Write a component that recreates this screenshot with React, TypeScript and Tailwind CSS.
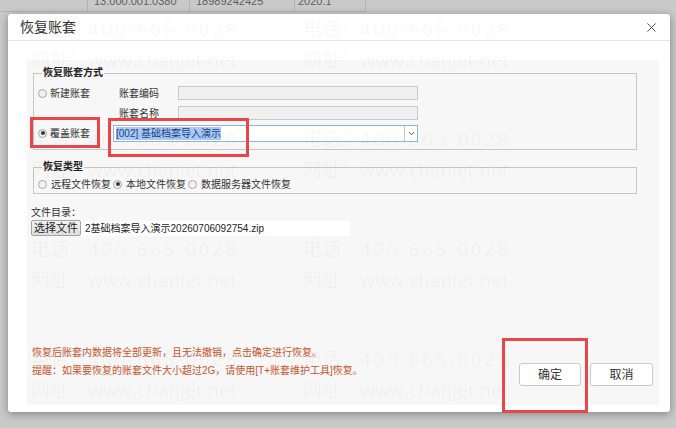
import React from 'react';
import { X, ChevronDown } from 'lucide-react';

// Account-set restore dialog sitting over a dimmed data grid.

const Radio = ({ checked = false }: { checked?: boolean }) => (
  <span className="w-[9px] h-[9px] rounded-full border border-[#a7a7a7] bg-[#f1f1f1] flex items-center justify-center shrink-0">
    {checked && <span className="w-[4px] h-[4px] rounded-full bg-[#3a3a3a]" />}
  </span>
);

const Watermark = () => {
  const tiles = Array.from({ length: 12 });
  return (
    <div className="absolute inset-0 pointer-events-none overflow-hidden">
      <div className="flex flex-wrap w-[820px] pl-[23px] font-['Open_Sans','Noto_Sans_CJK_SC',sans-serif] text-[19px] leading-[31px] text-black/[0.045]">
        {tiles.map((_, i) => (
          <div key={i} className="w-[272px] h-[110px] whitespace-nowrap">
            <div>
              电话：<span className="tracking-[2.5px]">400-665-0028</span>
            </div>
            <div>网址：www.chanjet.net</div>
          </div>
        ))}
      </div>
    </div>
  );
};

export default function App() {
  return (
    <div className="relative w-[676px] h-[428px] overflow-hidden bg-[#c9c9c9] font-['Liberation_Sans','Noto_Sans_CJK_SC',sans-serif] text-[#333]">
      {/* grid row peeking out behind the mask */}
      <div className="flex w-[366px] h-[12px] border-b border-[#b3b3b3] text-[11px] text-[#5f5f5f]">
        <div className="w-[88px] border-r border-[#b3b3b3]" />
        <div className="w-[102px] border-r border-[#b3b3b3] overflow-hidden pl-[6px]">
          <div className="-mt-[6px] leading-[14px]">13.000.001.0380</div>
        </div>
        <div className="w-[105px] border-r border-[#b3b3b3] overflow-hidden pl-[6px]">
          <div className="-mt-[6px] leading-[14px]">18989242425</div>
        </div>
        <div className="w-[71px] border-r border-[#b3b3b3] overflow-hidden pl-[3px]">
          <div className="-mt-[6px] leading-[14px]">2020.1</div>
        </div>
      </div>

      {/* dialog */}
      <div className="relative ml-[8px] mt-[2px] w-[662px] h-[398px] bg-white rounded-[3px] shadow-[0_2px_8px_rgba(0,0,0,0.35)] flex flex-col overflow-hidden">
        <div className="h-[27px] shrink-0 border-b border-[#e6e6e6] flex items-center justify-between pl-[12px] pr-[11px]">
          <span className="text-[14px] text-[#333]">恢复账套</span>
          <X size={15} strokeWidth={1.6} className="text-[#555]" />
        </div>

        <div className="pt-[19px] pl-[19px]">
          <div className="w-[632px] h-[345px] bg-[#f7f7f7] flex flex-col pl-[4px] pr-[6px] text-[10px]">
            {/* restore mode */}
            <fieldset className="ml-[2px] mt-[6px] w-[604px] border border-[#c6c6c6] pt-[3px] pb-[6px] pl-[4px]">
              <legend className="ml-[4px] px-[1px] font-bold leading-[14px] text-[#222]">恢复账套方式</legend>
              <div className="flex items-center h-[20px]">
                <div className="w-[81px] flex items-center gap-[3px]">
                  <Radio />
                  <span>新建账套</span>
                </div>
                <span className="w-[59px]">账套编码</span>
                <div className="w-[240px] h-[14px] border border-[#c9c9c9] bg-[#f0f0f0]" />
              </div>
              <div className="flex items-center h-[20px]">
                <div className="w-[81px]" />
                <span className="w-[59px]">账套名称</span>
                <div className="w-[240px] h-[14px] border border-[#c9c9c9] bg-[#f0f0f0]" />
              </div>
              <div className="flex items-center h-[20px]">
                <div className="w-[75px] flex items-center gap-[3px]">
                  <Radio checked />
                  <span>覆盖账套</span>
                </div>
                <div className="w-[305px] h-[17px] border border-[#8fb3dd] bg-white flex items-center">
                  <div className="flex-1 pl-[2px]">
                    <span className="bg-[#a9cbf3] text-[#1d3c88] leading-[13px] inline-block">[002] 基础档案导入演示</span>
                  </div>
                  <div className="w-[13px] h-full border-l border-[#c9c9c9] flex items-center justify-center">
                    <ChevronDown size={9} strokeWidth={2.5} className="text-[#444]" />
                  </div>
                </div>
              </div>
            </fieldset>

            {/* restore type */}
            <fieldset className="ml-[2px] mt-[10px] w-[604px] border border-[#c6c6c6] pt-[2px] pb-[1px] pl-[4px]">
              <legend className="ml-[4px] px-[1px] font-bold leading-[14px] text-[#222]">恢复类型</legend>
              <div className="flex items-center h-[16px]">
                <Radio />
                <span className="ml-[4px] mr-[2px]">远程文件恢复</span>
                <Radio checked />
                <span className="ml-[4px] mr-[2px]">本地文件恢复</span>
                <Radio />
                <span className="ml-[4px]">数据服务器文件恢复</span>
              </div>
            </fieldset>

            <div className="mt-[12px] leading-[14px]">文件目录：</div>
            <div className="flex items-center h-[16px]">
              <div className="w-[50px] h-[16px] border border-[#a3a3a3] rounded-[2px] bg-gradient-to-b from-[#f4f4f4] to-[#dedede] flex items-center justify-center text-[11px] text-[#222]">
                选择文件
              </div>
              <div className="w-[269px] h-[15px] bg-white flex items-center pl-[4px] text-[#222]">
                2基础档案导入演示20260706092754.zip
              </div>
            </div>

            <div className="mt-auto pb-[19px] flex items-end justify-between">
              <div className="mb-[6px] pl-[1px] leading-[18px] text-[#c8542d]">
                <div>恢复后账套内数据将全部更新，且无法撤销，点击确定进行恢复。</div>
                <div>提醒：如果要恢复的账套文件大小超过2G，请使用[T+账套维护工具]恢复。</div>
              </div>
              <div className="flex gap-[9px]">
                <button className="w-[62px] h-[23px] border border-[#c9c9c9] rounded-[3px] bg-white text-[12px] text-[#333]">确定</button>
                <button className="w-[63px] h-[23px] border border-[#c9c9c9] rounded-[3px] bg-white text-[12px] text-[#333]">取消</button>
              </div>
            </div>
          </div>
        </div>

        <Watermark />
      </div>

      {/* red call-outs */}
      <div className="absolute left-[30px] top-[117px] w-[70px] h-[31px] border-[3px] border-[#e8474a] pointer-events-none" />
      <div className="absolute left-[108px] top-[118px] w-[141px] h-[39px] border-[3px] border-[#e8474a] pointer-events-none" />
      <div className="absolute left-[502px] top-[338px] w-[86px] h-[75px] border-[3px] border-[#e8474a] pointer-events-none" />
    </div>
  );
}
